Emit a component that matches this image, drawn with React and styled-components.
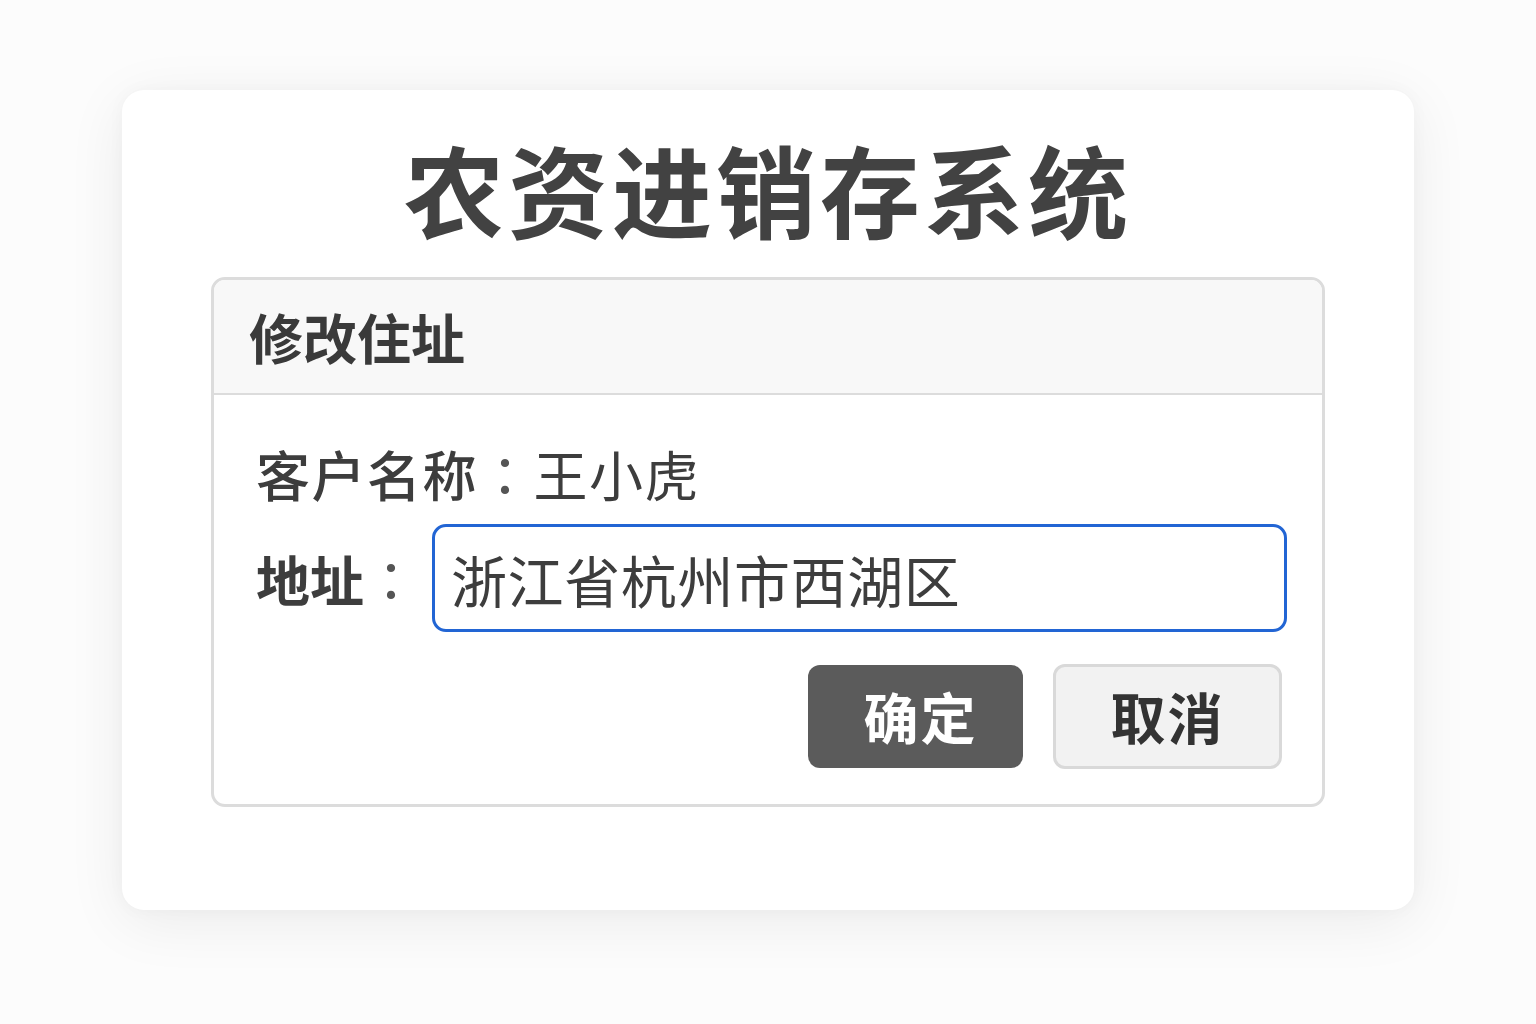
import React, { useState } from 'react';
import styled, { createGlobalStyle } from 'styled-components';

const GlobalStyle = createGlobalStyle`
  html, body {
    margin: 0;
    padding: 0;
    background: #fcfcfc;
  }
  body {
    font-family: "Noto Sans CJK SC", "Noto Sans", sans-serif;
    color: #3d3d3d;
  }
`;

const App = () => {
  const [address, setAddress] = useState('浙江省杭州市西湖区');

  return (
    <Page>
      <GlobalStyle />
      <Card>
        <Title>农资进销存系统</Title>
        <Panel>
          <PanelHeader>修改住址</PanelHeader>
          <PanelBody>
            <InfoRow>
              <strong>客户名称</strong>
              <Colon>：</Colon>
              王小虎
            </InfoRow>
            <FieldRow>
              <FieldLabel>
                地址<Colon>：</Colon>
              </FieldLabel>
              <AddressInput
                value={address}
                onChange={(e) => setAddress(e.target.value)}
              />
            </FieldRow>
            <Actions>
              <Button primary>确定</Button>
              <Button>取消</Button>
            </Actions>
          </PanelBody>
        </Panel>
      </Card>
    </Page>
  );
};

// Styled Components
const Page = styled.div`
  box-sizing: border-box;
  min-height: 100vh;
  padding-top: 90px;
  background: #fcfcfc;
`;

const Card = styled.main`
  box-sizing: border-box;
  width: 1292px;
  height: 820px;
  margin: 0 auto;
  padding: 38px 89px 0;
  background: #fff;
  border-radius: 22px;
  box-shadow: 0 12px 60px rgba(0, 0, 0, 0.07), 0 0 18px rgba(0, 0, 0, 0.03);
`;

const Title = styled.h1`
  margin: 0 0 29px;
  font-size: 100px;
  line-height: 120px;
  font-weight: 700;
  letter-spacing: 4px;
  text-align: center;
  color: #424242;
`;

const Panel = styled.section`
  border: 3px solid #dcdcdc;
  border-radius: 14px;
  overflow: hidden;
`;

const PanelHeader = styled.div`
  height: 113px;
  display: flex;
  align-items: center;
  padding-left: 35px;
  background: #f8f8f8;
  border-bottom: 2px solid #dcdcdc;
  font-size: 54px;
  font-weight: 700;
  color: #3a3a3a;
`;

const PanelBody = styled.div`
  padding: 49px 35px 35px 42px;
`;

const Colon = styled.span`
  font-family: "Noto Sans CJK TC", "Noto Sans CJK SC", sans-serif;
  font-weight: 400;
  color: #555;
`;

const InfoRow = styled.div`
  font-size: 54px;
  line-height: 60px;
  letter-spacing: 1.5px;
  color: #3d3d3d;

  strong {
    font-weight: 500;
  }
`;

const FieldRow = styled.div`
  display: flex;
  align-items: center;
  gap: 12px;
  margin-top: 20px;
`;

const FieldLabel = styled.label`
  width: 164px;
  flex-shrink: 0;
  font-size: 54px;
  font-weight: 700;
  color: #3d3d3d;
`;

const AddressInput = styled.input`
  box-sizing: border-box;
  flex: 1;
  height: 108px;
  padding: 0 16px;
  border: 3px solid #2265d4;
  border-radius: 14px;
  outline: none;
  background: #fff;
  font-family: "Noto Sans CJK SC", "Noto Sans", sans-serif;
  font-size: 56px;
  letter-spacing: 0.6px;
  color: #3d3d3d;
`;

const Actions = styled.div`
  display: flex;
  justify-content: flex-end;
  gap: 30px;
  margin-top: 32px;
  padding-right: 5px;
`;

const Button = styled.button`
  box-sizing: border-box;
  width: ${(p) => (p.primary ? '215px' : '229px')};
  height: ${(p) => (p.primary ? '103px' : '105px')};
  margin-top: ${(p) => (p.primary ? '1px' : '0')};
  padding: ${(p) => (p.primary ? '0 0 4px 10px' : '0 0 4px')};
  border: ${(p) => (p.primary ? 'none' : '3px solid #d9d9d9')};
  border-radius: 12px;
  background: ${(p) => (p.primary ? '#5b5b5b' : '#f2f2f2')};
  color: ${(p) => (p.primary ? '#fff' : '#333')};
  font-family: "Noto Sans CJK SC", "Noto Sans", sans-serif;
  font-size: 55px;
  font-weight: 700;
  letter-spacing: 2px;
  cursor: pointer;
`;

export default App;
